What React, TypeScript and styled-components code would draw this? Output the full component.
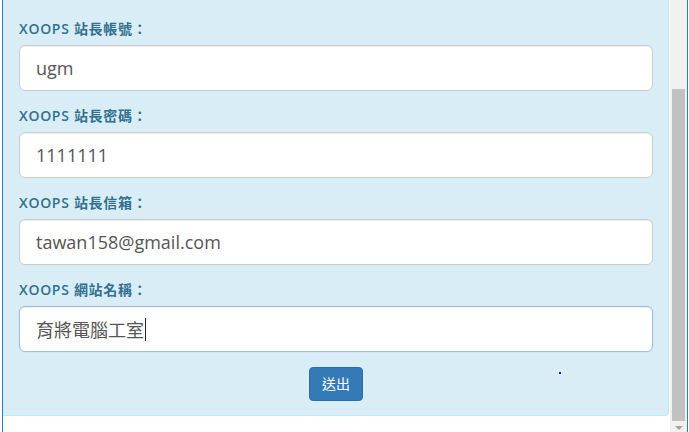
import React from "react";
import styled, { createGlobalStyle } from "styled-components";

const GlobalStyle = createGlobalStyle`
  html, body { margin: 0; padding: 0; background: #fff; overflow: hidden; }
  * { box-sizing: border-box; }
`;

const Frame = styled.div`
  display: flex;
  width: 689px;
  height: 432px;
  background: #fff;
  font-family: "Open Sans", "Noto Sans CJK TC", sans-serif;
`;

const LeftEdge = styled.div`
  width: 2px;
  background: #fff;
`;

const EdgeLine = styled.div`
  width: 1px;
  background: #2b7bd6;
`;

const Viewport = styled.div`
  flex: 1;
  overflow: hidden;
  display: flex;
  flex-direction: column;
`;

const Panel = styled.div`
  margin-right: 1px;
  background: #d9edf7;
  border: 1px solid #bce8f1;
  border-top: none;
  border-left: none;
  border-radius: 0 0 4px 0;
  padding: 19px 15px 14px 16px;
`;

const Group = styled.div`
  display: flex;
  flex-direction: column;
  margin-bottom: 15px;
`;

const Label = styled.label`
  font-size: 14px;
  line-height: 20px;
  font-weight: 600;
  letter-spacing: 0.7px;
  color: #31708f;
  margin-bottom: 6px;
`;

const Field = styled.div<{ $focus?: boolean }>`
  display: flex;
  align-items: center;
  height: 46px;
  padding: 0 16px;
  font-size: 18px;
  color: #555;
  background: #fff;
  border: 1px solid ${(p) => (p.$focus ? "#a8bcd4" : "#ccc")};
  border-radius: 6px;
  box-shadow: inset 0 1px 1px rgba(0, 0, 0, 0.075)
    ${(p) => (p.$focus ? ", 0 0 2px rgba(102,175,233,.25)" : "")};
`;

const Caret = styled.span`
  display: inline-block;
  width: 1px;
  height: 23px;
  background: #222;
  margin-left: 1px;
`;

const Footer = styled.div`
  position: relative;
  display: flex;
  justify-content: center;
`;

const Button = styled.button`
  font-family: "Open Sans", "Noto Sans CJK TC", sans-serif;
  font-size: 14px;
  line-height: 20px;
  padding: 6px 12px;
  color: #fff;
  background: #337ab7;
  border: 1px solid #2e6da4;
  border-radius: 4px;
`;

const Dot = styled.span`
  position: absolute;
  left: 540px;
  top: 5px;
  width: 2px;
  height: 2px;
  background: #1a1aff;
`;

const Track = styled.div`
  width: 17px;
  background: #f1f1f1;
  display: flex;
  flex-direction: column;
  align-items: center;
  padding-top: 89px;
`;

const Thumb = styled.div`
  width: 13px;
  height: 332px;
  background: #c1c1c1;
`;

const Arrow = styled.div`
  margin-top: 5px;
  width: 0;
  height: 0;
  border-left: 4px solid transparent;
  border-right: 4px solid transparent;
  border-top: 4px solid #a3a3a3;
`;

const RightEdge = styled.div`
  width: 1px;
  background: #2b7bd6;
`;

const fields = [
  { label: "XOOPS 站長帳號：", value: "ugm" },
  { label: "XOOPS 站長密碼：", value: "1111111" },
  { label: "XOOPS 站長信箱：", value: "tawan158@gmail.com" },
  { label: "XOOPS 網站名稱：", value: "育將電腦工室", focus: true },
];

export default function App() {
  return (
    <>
      <GlobalStyle />
      <Frame>
        <LeftEdge />
        <EdgeLine />
        <Viewport>
          <Panel>
            {fields.map((f) => (
              <Group key={f.label}>
                <Label>{f.label}</Label>
                <Field $focus={f.focus}>
                  <span>{f.value}</span>
                  {f.focus && <Caret />}
                </Field>
              </Group>
            ))}
            <Footer>
              <Button type="button">送出</Button>
              <Dot />
            </Footer>
          </Panel>
        </Viewport>
        <Track>
          <Thumb />
          <Arrow />
        </Track>
        <RightEdge />
        <LeftEdge style={{ width: 1 }} />
      </Frame>
    </>
  );
}
